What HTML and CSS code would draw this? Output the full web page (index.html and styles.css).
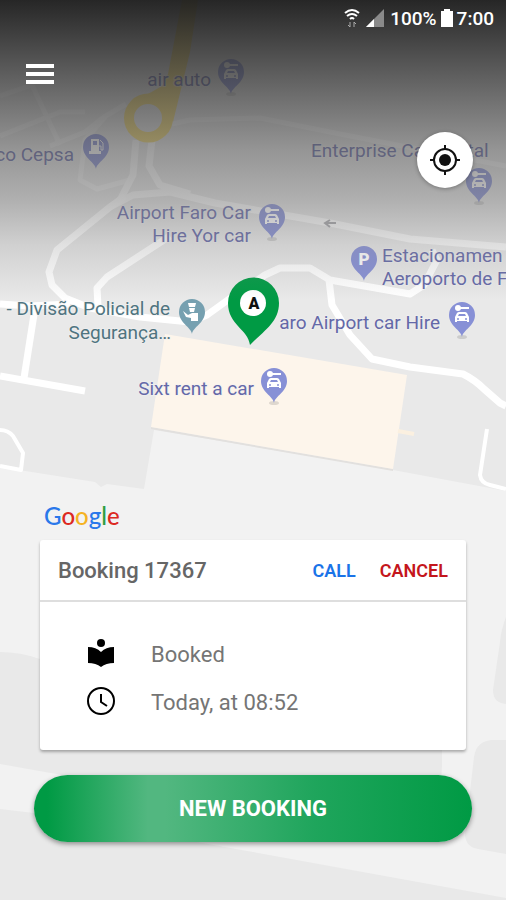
FILE: index.html
```html
<!DOCTYPE html>
<html lang="en">
<head>
<meta charset="UTF-8" />
<meta name="viewport" content="width=device-width, initial-scale=1" />
<title>Booking 17367</title>
<link rel="stylesheet" href="styles.css">
</head>
<body>
  <svg id="map" viewBox="0 0 506 900" preserveAspectRatio="xMidYMin slice" role="img" aria-label="Map of Faro airport">
    <defs>
      <path id="pin" d="M0 22 C-1 15 -13 11 -13 0 A13 13 0 0 1 13 0 C13 11 1 15 0 22 Z" />
      <g id="rental">
        <ellipse cx="0" cy="22" rx="5" ry="2" class="pin-shadow" />
        <use href="#pin" />
        <g fill="#fff">
          <circle cx="-4" cy="-7" r="3" />
          <rect x="-3" y="-8" width="10" height="2" />
          <path d="M-7 7 V2 L-5 -2 Q-4 -3 -3 -3 H3 Q4 -3 5 -2 L7 2 V7 H5 V6 H-5 V7 Z M-4 1 H4 L3 -1 H-3 Z" fill-rule="evenodd" />
        </g>
        <circle cx="-4" cy="4" r="1" />
        <circle cx="4" cy="4" r="1" />
      </g>
    </defs>

    <rect width="506" height="900" fill="#e9e9e9" />

    <!-- aprons and blocks -->
    <path fill="#f2f2f2" d="M0 467 L95 482 L101 487 L107 484 L144 489 L154 430 L393 470 L506 491 V900 H0 Z" />
    <path fill="#e9e9e9" d="M0 652 Q20 652 40 659 L442 735 V765 L438 842 L0 764 Z" />
    <path fill="#e9e9e9" d="M506 617 Q501 630 500 642 L493 690 Q493 703 506 704 Z" />
    <path fill="#e9e9e9" d="M506 740 H491 Q476 742 474 757 L465 835 Q466 847 478 849 L506 854 Z" />
    <path fill="#e9e9e9" d="M0 809 L34 813 L253 852 L506 898 V900 H0 Z" />

    <!-- terminal -->
    <path fill="#e2e0de" d="M151 427 L393 469 V471 L151 429 Z" />
    <path fill="#fdf5eb" d="M165 334 L407 375 L393 469 L151 427 Z" />
    <path fill="none" stroke="#fbf0e0" stroke-width="4" d="M398 431 L414 434" />

    <g class="road faint">
      <path d="M0 136 L60 112 L85 112" />
      <path d="M0 96 L32 85 L60 145" />
      <path d="M50 146 L85 132 L104 117 L126 104" />
      <path d="M105 117 L85 140 L80 180 L97 189 L130 180" />
      <path d="M172 124 L190 120 L260 118 L340 134 L506 166" />
    </g>
    <g class="road upper">
      <path d="M136 140 L133 175 L120 200" />
      <path d="M152 140 L149 166 L160 185 L190 194" />
      <path d="M110 207 L133 195 L170 192 L215 203 L330 223 L410 239 L506 247" />
    </g>
    <g class="road">
      <path d="M125 196 L110 207 L57 250 L49 272 L52 285 L65 298 L90 308 L140 317 L190 322 L207 315 L232 297 L265 275 L280 268 L310 268 L330 280 L370 287 L410 294 L424 285 L437 260 L432 250" />
      <path d="M98 306 L97 288 L107 277 L170 236" />
      <path d="M0 304 L30 306 L70 304" />
      <path d="M35 308 L24 378" />
      <path d="M0 376 L85 391" />
      <path d="M329 280 L332 305 L350 335 L372 359 L410 367 L463 374 Q475 380 484 389 L500 403 L506 406" />
    </g>
    <g class="road thin">
      <path d="M487 429 L480 475 Q481 483 490 485 L506 489" />
      <path d="M0 430 Q8 430 13 436 L23 453 L21 470 L0 466" />
    </g>
    <path fill="none" stroke="#a8a8ac" stroke-width="2" d="M325 223 H336 M330 220 L325 223 L330 227" />

    <!-- roundabout -->
    <g class="roundabout">
      <path d="M182 0 H198 L190 52 L173 122 L163 108 L148 94 L162 86 L168 74 Z" />
      <path fill-rule="evenodd" d="M124 118 A24 24 0 1 1 173 118 A24 24 0 1 1 124 118 Z M134 118 A14 14 0 1 0 162 118 A14 14 0 1 0 134 118 Z" />
    </g>

    <g class="label">
      <text x="211" y="86" class="end">air auto</text>
      <text x="74" y="161" class="end">co Cepsa</text>
      <text x="311" y="157">Enterprise Car Rental</text>
      <text x="251" y="219" class="end">Airport Faro Car</text>
      <text x="251" y="242" class="end">Hire Yor car</text>
      <text x="382" y="262">Estacionamen</text>
      <text x="382" y="285">Aeroporto de F</text>
      <text x="440" y="329" class="end">aro Airport car Hire</text>
      <text x="254" y="395" class="end">Sixt rent a car</text>
    </g>
    <g class="label police">
      <text x="170" y="315" class="end">- Divisão Policial de</text>
      <text x="171" y="339" class="end">Segurança…</text>
    </g>

    <g fill="#8790d6">
      <use href="#rental" x="231" y="72" />
      <use href="#rental" x="479" y="181" />
      <use href="#rental" x="272" y="217" />
      <use href="#rental" x="462" y="315" />
      <use href="#rental" x="274" y="381" />
      <use href="#pin" x="96" y="147" />
      <use href="#pin" x="364" y="259" />
    </g>
    <path fill="#fff" fill-rule="evenodd" d="M91 139 H99 V151 H101 V154 H89 V151 H91 Z M93 141 V145 H97 V141 Z" />
    <path fill="none" stroke="#fff" stroke-width="1" d="M99 146 H101 V150 H103 V143 L100 140" />
    <text x="364" y="265" class="pin-letter">P</text>
    <use href="#pin" x="192" y="312" fill="#76a0b0" />
    <path fill="#fff" d="M188 303 H196 L195 307 H189 Z M189 308 H195 L194 312 H190 Z M183 311 L188 315 L192 313 H198 V321 H191 V318 L186 317 Z" />

    <!-- pickup point -->
    <path fill="#009a44" d="M250 345 C248 329 228 325 228 303 A25 25 0 0 1 279 303 C279 323 262 332 250 345 Z" />
    <circle cx="253" cy="303" r="13" fill="#fff" />
    <text x="254" y="309" class="pickup-letter">A</text>
  </svg>
  <div id="shade"></div>

  <div id="status-bar">
    <svg width="16" height="20" viewBox="0 0 16 20" fill="none" stroke="#fff" stroke-width="2" aria-hidden="true">
      <path d="M1 5 Q8 -1 15 5 M3 8 Q8 4 13 8 M6 11 Q8 9 10 11" />
      <path d="M6 14 V19 M4 17 L6 19 M10 19 V14 L12 16" stroke="#aaa" stroke-width="1" />
    </svg>
    <svg class="signal" width="18" height="18" viewBox="0 0 18 18" aria-hidden="true">
      <path d="M0 18 L18 0 V18 Z" fill="#8a8a8a" />
      <path d="M0 18 L8 10 V18 Z" fill="#fff" />
    </svg>
    <span>100%</span>
    <svg width="12" height="18" viewBox="0 0 12 18" fill="#fff" aria-hidden="true">
      <path d="M3 0 H9 V2 H12 V18 H0 V2 H3 Z" />
    </svg>
    <span>7:00</span>
  </div>

  <header>
    <button id="menu-btn" type="button" aria-label="Menu">
      <svg width="28" height="20" viewBox="0 0 28 20" fill="#fff" aria-hidden="true">
        <path d="M0 0 H28 V4 H0 Z M0 8 H28 V12 H0 Z M0 16 H28 V20 H0 Z" />
      </svg>
    </button>
  </header>

  <button id="locate-btn" type="button" aria-label="My location">
    <svg width="32" height="32" viewBox="0 0 32 32" aria-hidden="true">
      <circle cx="16" cy="16" r="11" fill="none" stroke="#111" stroke-width="2" />
      <circle cx="16" cy="16" r="6" fill="#111" />
      <path d="M16 1 V5 M16 27 V31 M1 16 H5 M27 16 H31" stroke="#111" stroke-width="2" />
    </svg>
  </button>

  <main>
    <div id="google"><span class="blue">G</span><span class="red">o</span><span class="yellow">o</span><span class="blue">g</span><span class="green">l</span><span class="red">e</span></div>

    <section id="booking">
      <div class="booking-head">
        <h1>Booking 17367</h1>
        <button class="call" type="button">CALL</button>
        <button class="cancel" type="button">CANCEL</button>
      </div>
      <ul>
        <li>
          <svg width="32" height="32" viewBox="0 0 32 32" aria-hidden="true">
            <circle cx="16" cy="5" r="4" />
            <path d="M16 14 Q11 9 3 9 V25 Q11 25 16 29 Q21 25 29 25 V9 Q21 9 16 14 Z" />
          </svg>
          Booked
        </li>
        <li>
          <svg width="32" height="32" viewBox="0 0 32 32" fill="none" stroke="#000" stroke-width="2" aria-hidden="true">
            <circle cx="16" cy="15" r="13" />
            <path d="M16 8 V16 L22 20" />
          </svg>
          Today, at 08:52
        </li>
      </ul>
    </section>

    <button id="new-booking" type="button">NEW BOOKING</button>
  </main>
</body>
</html>
```
FILE: styles.css
```css
* {
  box-sizing: border-box;
}
body {
  font-family: Roboto, "Liberation Sans", sans-serif;
  background-color: #e9e9e9;
  color: #757575;
  margin: 0;
  min-height: 100vh;
  position: relative;
  display: flex;
  flex-direction: column;
}
button {
  font-family: inherit;
  border: none;
  padding: 0;
  background: none;
  cursor: pointer;
}
svg {
  flex-shrink: 0;
}

/* map */
#map {
  position: absolute;
  top: 0;
  left: 0;
  width: 100%;
  height: 100%;
  z-index: -2;
}
#shade {
  position: absolute;
  top: 0;
  left: 0;
  right: 0;
  height: 300px;
  z-index: -1;
  background: linear-gradient(
    rgba(32,32,32,0.97) 0,
    rgba(42,42,42,0.9) 30px,
    rgba(60,60,60,0.78) 80px,
    rgba(93,93,93,0.6) 150px,
    rgba(119,119,119,0.5) 200px,
    rgba(135,135,135,0.25) 245px,
    rgba(150,150,150,0) 300px
  );
}
.road {
  fill: none;
  stroke: #fff;
  stroke-width: 7;
  stroke-linejoin: round;
}
.upper {
  stroke: #fcfcfc;
}
.faint {
  stroke-width: 5;
  opacity: 0.5;
}
.thin {
  stroke-width: 4;
}
.roundabout {
  fill: #f7dc6f;
}
.label {
  font-size: 19px;
  fill: #6468a8;
  stroke: #f2f2f2;
  stroke-width: 2px;
  stroke-opacity: 0.5;
  paint-order: stroke;
}
.police {
  fill: #4f7480;
}
.end {
  text-anchor: end;
}
.pin-shadow {
  fill: #000;
  opacity: 0.12;
}
.pin-letter {
  font-size: 17px;
  font-weight: 900;
  fill: #fff;
  text-anchor: middle;
}
.pickup-letter {
  font-size: 16px;
  font-weight: 900;
  fill: #111;
  text-anchor: middle;
}

/* top */
#status-bar {
  display: flex;
  justify-content: flex-end;
  align-items: center;
  gap: 4px;
  height: 36px;
  padding-right: 12px;
  color: #fff;
  font-size: 19px;
  font-weight: 500;
}
.signal {
  margin: 0 2px;
}
header {
  padding: 16px 26px;
}
#menu-btn {
  display: block;
  padding: 12px 0;
}
#menu-btn svg {
  display: block;
}
#locate-btn {
  align-self: flex-end;
  display: flex;
  align-items: center;
  justify-content: center;
  width: 56px;
  height: 56px;
  margin: 20px 33px;
  border-radius: 50%;
  background-color: #fff;
  box-shadow: 0 1px 4px rgba(0,0,0,0.3);
}

/* bottom */
main {
  margin-top: auto;
  padding: 0 34px 58px;
}
#google {
  padding: 0 10px;
  font-family: Lato, sans-serif;
  font-size: 24px;
  font-weight: 500;
  line-height: 32px;
  margin-bottom: 8px;
}
.blue {
  color: #2a78ea;
}
.red {
  color: #dc2a22;
}
.yellow {
  color: #f5b223;
}
.green {
  color: #2f9e41;
}
#booking {
  margin: 0 6px 25px;
  background-color: #fff;
  border-radius: 3px;
  box-shadow: 0 2px 3px rgba(0,0,0,0.3);
}
.booking-head {
  display: flex;
  align-items: center;
  height: 62px;
  padding: 0 18px;
  border-bottom: 2px solid #dedede;
}
.booking-head h1 {
  margin: 0 auto 0 0;
  font-size: 22px;
  font-weight: 500;
  color: #666;
}
.booking-head button {
  font-size: 18px;
  font-weight: 600;
  margin-left: 24px;
}
.booking-head .call {
  color: #1a73e8;
}
.booking-head .cancel {
  color: #c4161c;
}
#booking ul {
  list-style: none;
  margin: 0;
  padding: 28px 45px 24px;
}
#booking li {
  display: flex;
  align-items: center;
  gap: 34px;
  height: 48px;
  font-size: 22px;
}
#new-booking {
  display: block;
  width: 100%;
  height: 67px;
  border-radius: 34px;
  background: linear-gradient(90deg, #009a44 3%, #52b780 26%, #52b780 30%, #1fa55c 64%, #009a44 100%);
  box-shadow: 0 2px 5px rgba(0,0,0,0.4);
  color: #fff;
  font-size: 22px;
  font-weight: 700;
}
```
